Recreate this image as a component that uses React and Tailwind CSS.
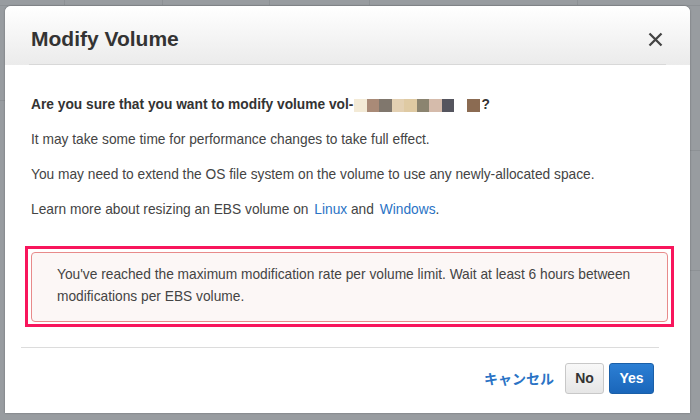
import React from "react";

const pixels = [
  "bg-[#f3ead6]",
  "bg-[#a98a77]",
  "bg-[#80776d]",
  "bg-[#e3d0b2]",
  "bg-[#dfcaa3]",
  "bg-[#8b8470]",
  "bg-[#d5bbab]",
  "bg-[#55555e]",
];

const App = () => {
  return (
    <div className="relative w-[700px] h-[420px] overflow-hidden bg-[#989ca0] font-['Liberation_Sans',Arial,sans-serif]">
      {/* faint page behind the overlay */}
      <div className="absolute inset-0 pointer-events-none">
        <div className="flex h-[6px] border-b border-[#8d9195]">
          <div className="w-[65px] border-r border-[#8d9195]" />
          <div className="w-[98px] border-r border-[#8d9195]" />
          <div className="w-[107px] border-r border-[#8d9195]" />
          <div className="w-[100px] border-r border-[#8d9195]" />
          <div className="w-[208px] border-r border-[#8d9195]" />
          <div className="flex-1" />
        </div>
        <div className="absolute right-0 top-[150px] w-[10px] h-px bg-[#8d9195]" />
        <div className="absolute right-0 top-[270px] w-[10px] h-px bg-[#8d9195]" />
        <div className="absolute left-0 top-[100px] w-[5px] h-px bg-[#8d9195]" />
      </div>

      <div className="relative pt-[6px] pl-[5px]">
        <div className="w-[685px] h-[407px] bg-white rounded-t-[6px] flex flex-col text-[#444] shadow-[0_0_2px_rgba(0,0,0,0.35)]">
          {/* header */}
          <div className="h-[59px] rounded-t-[6px] bg-gradient-to-b from-white to-[#ebebeb] px-[24px] flex flex-col">
            <div className="flex-1 flex items-center justify-between pl-[2px] pr-[3px] pt-[8px]">
              <h1 className="text-[21px] font-bold text-[#333]">Modify Volume</h1>
              <svg width="15" height="15" viewBox="0 0 15 15">
                <path d="M1.5 1.5 L13.5 13.5 M13.5 1.5 L1.5 13.5" stroke="#444" strokeWidth="2.3" />
              </svg>
            </div>
            <div className="h-px bg-[#d8d8d8]" />
          </div>

          {/* body */}
          <div className="pt-[30px] px-[20px]">
            <div className="pl-[6px] flex flex-col gap-[15px] text-[13.75px] leading-[20px]">
              <p className="font-bold text-[#333] flex items-center">
                Are you sure that you want to modify volume vol-
                <span className="flex h-[13px] ml-[1px]">
                  {pixels.map((c, i) => (
                    <span key={i} className={`w-[12.5px] h-[13px] ${c}`} />
                  ))}
                  <span className="w-[13px]" />
                  <span className="w-[13px] h-[13px] bg-[#8b6b52]" />
                </span>
                <span className="ml-[1px]">?</span>
              </p>
              <p>It may take some time for performance changes to take full effect.</p>
              <p>You may need to extend the OS file system on the volume to use any newly-allocated space.</p>
              <p>
                Learn more about resizing an EBS volume on{" "}
                <span className="text-[#2a73c5] ml-[2px]">Linux</span> and{" "}
                <span className="text-[#2a73c5] ml-[2px]">Windows</span>.
              </p>
            </div>

            <div className="mt-[26px] w-[649px] border-[3px] border-[#f8155c] p-[3px] pb-[2px]">
              <div className="rounded-[4px] border border-[#e88a8a] bg-[#fcf7f6] pl-[25px] pt-[11px] pb-[13px] text-[13.75px] leading-[22px]">
                You've reached the maximum modification rate per volume limit. Wait at least 6 hours between
                <br />
                modifications per EBS volume.
              </div>
            </div>
          </div>

          {/* footer */}
          <div className="pl-[16px] pr-[31px] mt-[20px]">
            <div className="h-px bg-[#dcdcdc]" />
            <div className="flex items-center justify-end gap-[5px] pt-[15px] pr-[5px]">
              <span className="text-[#2a73c5] font-bold text-[14px] mr-[6px] font-['Noto_Sans_CJK_JP',sans-serif]">キャンセル</span>
              <button className="h-[31px] w-[39px] rounded-[3px] border border-[#c8c8c8] bg-gradient-to-b from-[#f8f8f8] to-[#e6e6e6] text-[14px] font-bold text-[#333]">
                No
              </button>
              <button className="h-[31px] w-[45px] rounded-[3px] border border-[#1a5fa8] bg-gradient-to-b from-[#2c7fd4] to-[#1a66ba] text-[14px] font-bold text-white">
                Yes
              </button>
            </div>
          </div>
        </div>
      </div>
    </div>
  );
};

export default App;
